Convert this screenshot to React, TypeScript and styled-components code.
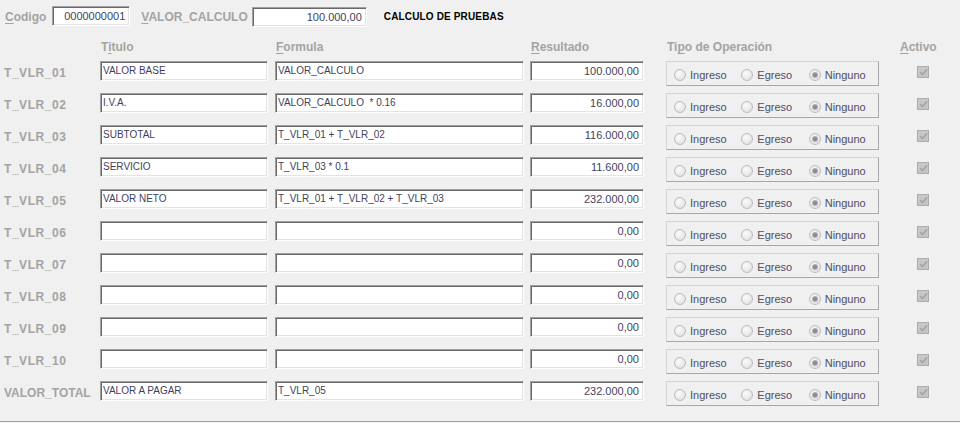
import React from "react";
import styled, { createGlobalStyle } from "styled-components";

const Global = createGlobalStyle`
  html, body { margin: 0; padding: 0; background: #f0f0f0; }
  body { font-family: "Liberation Sans", Arial, sans-serif; }
`;

const Page = styled.div`
  width: 960px;
  height: 421px;
  background: #f0f0f0;
  border-bottom: 1px solid #a0a0a0;
  box-shadow: 0 1px 0 #ffffff;
  overflow: hidden;
`;

const TopBar = styled.div`
  display: flex;
  align-items: flex-start;
  padding: 6px 0 0 5px;
  height: 22px;
`;

const Label = styled.span<{ $size?: number; $ml?: number; $mt?: number; $ls?: number }>`
  font-size: ${(p) => p.$size ?? 12}px;
  font-weight: bold;
  color: #a3a3a3;
  letter-spacing: ${(p) => p.$ls ?? 0}px;
  margin-left: ${(p) => p.$ml ?? 0}px;
  margin-top: ${(p) => p.$mt ?? 0}px;
  white-space: nowrap;
  line-height: 20px;
  u { text-decoration: underline; text-underline-offset: 2px; }
`;

const Field = styled.div<{ $w: number; $right?: boolean; $num?: boolean; $ml?: number; $mt?: number }>`
  box-sizing: border-box;
  width: ${(p) => p.$w}px;
  height: 20px;
  margin-left: ${(p) => p.$ml ?? 0}px;
  margin-top: ${(p) => p.$mt ?? 0}px;
  background: #ffffff;
  border: 1px solid;
  border-color: #a0a0a0 #ffffff #ffffff #a0a0a0;
  box-shadow: inset 1px 1px 0 #696969, inset -1px -1px 0 #e3e3e3;
  padding: ${(p) => (p.$right ? "0 4px 0 2px" : "0 2px 0 2px")};
  text-align: ${(p) => (p.$right ? "right" : "left")};
  font-size: ${(p) => (p.$num ? 11 : 10)}px;
  line-height: 18px;
  color: #3f3f5c;
  white-space: pre;
  overflow: hidden;
`;

const Caption = styled.span`
  margin-left: 17px;
  margin-top: 1px;
  font-size: 10px;
  letter-spacing: 0.15px;
  font-weight: bold;
  color: #000000;
  line-height: 20px;
`;

const Grid = styled.div`
  display: grid;
  grid-template-columns: 95px 175px 255px 136px 234px 60px;
  padding-left: 5px;
`;

const HeaderRow = styled(Grid)`
  margin-top: 9px;
  height: 20px;
  align-items: center;
`;

const Header = styled.span<{ $ml?: number }>`
  font-size: 12px;
  font-weight: bold;
  color: #a3a3a3;
  margin-left: ${(p) => p.$ml ?? 1}px;
  line-height: 20px;
  white-space: nowrap;
  u { text-decoration: underline; text-underline-offset: 2px; }
`;

const Rows = styled(Grid)`
  margin-top: 4px;
  grid-auto-rows: 20px;
  row-gap: 12px;
  align-items: start;
`;

const RowLabel = styled.span<{ $ls?: number }>`
  font-size: 12px;
  font-weight: bold;
  color: #a3a3a3;
  letter-spacing: ${(p) => p.$ls ?? 0}px;
  line-height: 20px;
  padding-top: 2px;
  white-space: nowrap;
  margin-left: -1px;
`;

const RadioBox = styled.div`
  box-sizing: border-box;
  width: 213px;
  height: 25px;
  border: 1px solid;
  border-color: #d4d4d4 #a8a8a8 #a8a8a8 #d4d4d4;
  display: flex;
  align-items: center;
  padding: 3px 0 0 7px;
`;

const RadioItem = styled.label<{ $w: number }>`
  display: flex;
  align-items: center;
  width: ${(p) => p.$w}px;
  font-size: 11px;
  color: #4e4e64;
  gap: 4px;
`;

const RadioCircle = styled.span<{ $on?: boolean }>`
  box-sizing: border-box;
  width: 12px;
  height: 12px;
  border-radius: 50%;
  border: 1px solid #bcbcbc;
  background: radial-gradient(circle at 40% 35%, #fbfbfb 0%, #e4e4e4 70%, #d6d6d6 100%);
  display: flex;
  align-items: center;
  justify-content: center;
  &::after {
    content: "";
    display: ${(p) => (p.$on ? "block" : "none")};
    width: 4px;
    height: 4px;
    border-radius: 50%;
    background: #8c8c8c;
    box-shadow: 0 0 0 1px #b0b0b0;
  }
`;

const Check = styled.span`
  box-sizing: border-box;
  width: 12px;
  height: 12px;
  margin: 5px 0 0 17px;
  background: #c6c6c6;
  border: 1px solid #adadad;
  display: flex;
  align-items: center;
  justify-content: center;
`;

type Row = { label: string; titulo: string; formula: string; res: string; ls?: number };

const rows: Row[] = [
  { label: "T_VLR_01", titulo: "VALOR BASE", formula: "VALOR_CALCULO", res: "100.000,00" },
  { label: "T_VLR_02", titulo: "I.V.A.", formula: "VALOR_CALCULO  * 0.16", res: "16.000,00" },
  { label: "T_VLR_03", titulo: "SUBTOTAL", formula: "T_VLR_01 + T_VLR_02", res: "116.000,00" },
  { label: "T_VLR_04", titulo: "SERVICIO", formula: "T_VLR_03 * 0.1", res: "11.600,00" },
  { label: "T_VLR_05", titulo: "VALOR NETO", formula: "T_VLR_01 + T_VLR_02 + T_VLR_03", res: "232.000,00" },
  { label: "T_VLR_06", titulo: "", formula: "", res: "0,00" },
  { label: "T_VLR_07", titulo: "", formula: "", res: "0,00" },
  { label: "T_VLR_08", titulo: "", formula: "", res: "0,00" },
  { label: "T_VLR_09", titulo: "", formula: "", res: "0,00" },
  { label: "T_VLR_10", titulo: "", formula: "", res: "0,00" },
  { label: "VALOR_TOTAL", titulo: "VALOR A PAGAR", formula: "T_VLR_05", res: "232.000,00" },
];

const CheckMark = () => (
  <svg width="9" height="8" viewBox="0 0 9 8">
    <path d="M1 4 L3.5 6.5 L8 1.5" fill="none" stroke="#a4a4a4" strokeWidth="1.6" />
  </svg>
);

export default function App() {
  return (
    <>
      <Global />
      <Page>
        <TopBar>
          <Label $mt={1}>
            <u>C</u>odigo
          </Label>
          <Field $w={78} $right $num $ml={6}>
            0000000001
          </Field>
          <Label $ml={11} $mt={1}>
            <u>V</u>ALOR_CALCULO
          </Label>
          <Field $w={115} $right $num $ml={4} $mt={1}>
            100.000,00
          </Field>
          <Caption>CALCULO DE PRUEBAS</Caption>
        </TopBar>
        <HeaderRow>
          <span />
          <Header>
            T<u>i</u>tulo
          </Header>
          <Header>
            <u>F</u>ormula
          </Header>
          <Header>
            <u>R</u>esultado
          </Header>
          <Header>
            Ti<u>p</u>o de Operación
          </Header>
          <Header $ml={0}>
            <u>A</u>ctivo
          </Header>
        </HeaderRow>
        <Rows>
          {rows.map((r) => (
            <React.Fragment key={r.label}>
              <RowLabel $ls={r.label.startsWith("T_") ? 0.55 : 0}>{r.label}</RowLabel>
              <Field $w={168}>{r.titulo}</Field>
              <Field $w={249}>{r.formula}</Field>
              <Field $w={114} $right $num>
                {r.res}
              </Field>
              <RadioBox>
                <RadioItem $w={68}>
                  <RadioCircle />
                  Ingreso
                </RadioItem>
                <RadioItem $w={68}>
                  <RadioCircle />
                  Egreso
                </RadioItem>
                <RadioItem $w={70}>
                  <RadioCircle $on />
                  Ninguno
                </RadioItem>
              </RadioBox>
              <Check>
                <CheckMark />
              </Check>
            </React.Fragment>
          ))}
        </Rows>
      </Page>
    </>
  );
}
